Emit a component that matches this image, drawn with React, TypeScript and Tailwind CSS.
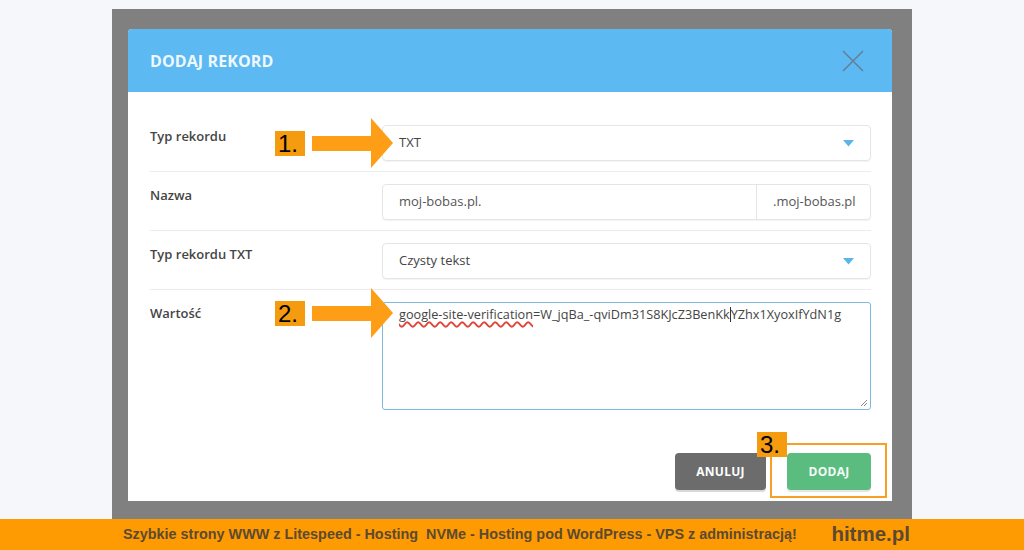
import React from "react";

const ui = { fontFamily: '"Open Sans", "Noto Sans", sans-serif' };
const arial = { fontFamily: '"Liberation Sans", Arial, sans-serif' };

function Caret() {
    return (
        <svg width="11" height="7" viewBox="0 0 11 7">
            <path d="M0 0 L11 0 L5.5 6.5 Z" fill="#5bb5ea"/>
        </svg>
    )
}

function Row({label, children, last}: {label: string, children: React.ReactNode, last?: boolean}) {
    return (
        <div className={"flex pt-3 " + (last ? "" : "pb-[10px] border-b border-[#ececec]")}>
            <div className="w-[232px] pt-[1px] text-[13px] leading-5 font-semibold text-[#454545]">{label}</div>
            <div className="flex-1">{children}</div>
        </div>
    )
}

function SelectBox({value}: {value: string}) {
    return (
        <div className="h-9 flex items-center justify-between pl-4 pr-[16px] border border-[#e3e6e9] rounded shadow-[0_1px_1px_rgba(0,0,0,0.05)] text-[13px] text-[#444]">
            <span>{value}</span>
            <Caret/>
        </div>
    )
}

function Arrow({num, top}: {num: string, top: number}) {
    return (
        <div className="absolute left-[275px] flex items-center" style={{top}}>
            <div className="w-[30px] h-[25px] bg-[#f59b10] text-black text-[24px] leading-[25px] pl-[3px]" style={arial}>{num}</div>
            <div className="ml-[7px] w-[60px] h-[15px] bg-[#fd9e16]"/>
            <svg width="22" height="50" viewBox="0 0 22 50" className="-ml-px">
                <path d="M0 0 L22 25 L0 50 Z" fill="#fd9e16"/>
            </svg>
        </div>
    )
}

export default function App() {
    return (
        <div className="relative w-[1024px] h-[550px] bg-[#f5f7fa] flex flex-col overflow-hidden" style={ui}>
            <div className="flex-1 pl-[112px] pt-[9px] flex">
                <div className="w-[800px] bg-[#808080] pt-5 pl-4 pr-5 pb-[18px] flex">
                    <div className="flex-1 bg-white rounded-t flex flex-col">
                        <div className="h-[63px] bg-[#5cb9f2] rounded-t flex items-center justify-between pl-[22px] pr-[28px]">
                            <h1 className="text-[16px] font-bold text-[#eef8fe] tracking-[0.1px]">DODAJ REKORD</h1>
                            <svg width="22" height="22" viewBox="0 0 22 22">
                                <path d="M1 1 L21 21 M21 1 L1 21" stroke="#61809e" strokeWidth="1.6"/>
                            </svg>
                        </div>
                        <div className="pt-[21px] pl-[22px] pr-[21px] flex flex-col">
                            <Row label="Typ rekordu">
                                <SelectBox value="TXT"/>
                            </Row>
                            <Row label="Nazwa">
                                <div className="h-9 flex border border-[#e3e6e9] rounded shadow-[0_1px_1px_rgba(0,0,0,0.05)] text-[13px] text-[#555]">
                                    <div className="flex-1 flex items-center pl-4">moj-bobas.pl.</div>
                                    <div className="w-[114px] flex items-center pl-[16px] border-l border-[#e3e6e9]">.moj-bobas.pl</div>
                                </div>
                            </Row>
                            <Row label="Typ rekordu TXT">
                                <SelectBox value="Czysty tekst"/>
                            </Row>
                            <Row label="Wartość" last>
                                <div className="relative h-[108px] border border-[#7db9e0] rounded-[3px] pl-4 pt-[1px] text-[12.7px] leading-5 text-[#444]">
                                    <span className="underline decoration-wavy decoration-[#e0453a] decoration-[1.5px] underline-offset-2 [text-decoration-skip-ink:none]">google-site-verification</span>
                                    =W_jqBa_-qviDm31S8KJcZ3BenKk<span className="inline-block w-px h-[15px] bg-[#333] align-[-3px]"/>YZhx1XyoxIfYdN1g
                                    <svg width="8" height="8" viewBox="0 0 8 8" className="absolute right-[2px] bottom-[2px]">
                                        <path d="M7 1 L1 7 M7 4 L4 7" stroke="#8a8a8a" strokeWidth="1"/>
                                    </svg>
                                </div>
                            </Row>
                        </div>
                        <div className="flex justify-end gap-[21px] pt-[43px] pr-[21px]">
                            <button className="w-[91px] h-[37px] rounded bg-[#6c6c6c] text-white text-[12px] font-bold tracking-[0.3px] shadow-[0_2px_0_rgba(0,0,0,0.15)]">ANULUJ</button>
                            <button className="w-[84px] h-[37px] rounded bg-[#5bbc80] text-[#f2fbf5] text-[12px] font-bold tracking-[0.3px] shadow-[0_2px_0_rgba(0,0,0,0.1)]">DODAJ</button>
                        </div>
                    </div>
                </div>
            </div>
            <div className="h-[31px] bg-[#fe9a02] flex items-center pl-[123px] text-[#5c4a30] font-bold" style={arial}>
                <span className="text-[14.4px] whitespace-pre">Szybkie strony WWW z Litespeed - Hosting  NVMe - Hosting pod WordPress - VPS z administracją!</span>
                <span className="ml-auto mr-[114px] text-[20.5px]">hitme.pl</span>
            </div>

            <Arrow num="1." top={118}/>
            <Arrow num="2." top={288}/>
            <div className="absolute left-[770px] top-[443px] w-[117px] h-[55px] border-2 border-[#f8a024]"/>
            <div className="absolute left-[757px] top-[432px] w-[30px] h-[25px] bg-[#f59b10] text-black text-[24px] leading-[25px] pl-[3px]" style={arial}>3.</div>
        </div>
    )
}
